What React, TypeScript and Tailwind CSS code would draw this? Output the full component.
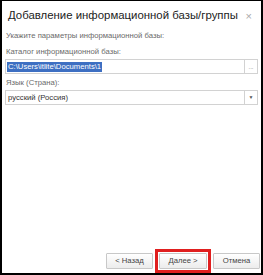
export default function App() {
  return (
    <div
      className="w-[263px] h-[275px] bg-white border-black border-l-2 border-r-2 border-t border-b-2 flex flex-col text-[#333]"
      style={{ fontFamily: '"Liberation Sans", Arial, sans-serif' }}
    >
      <div className="flex items-center justify-between pl-[6px] pr-[9px] h-[30px] shrink-0">
        <span className="text-[11.4px] leading-none text-[#222] whitespace-nowrap">Добавление информационной базы/группы</span>
        <span className="text-[11px] text-[#aaa] leading-none">×</span>
      </div>

      <div className="px-[3px] flex flex-col">
        <div className="text-[7.7px] leading-[10px] text-[#6a6a6a] pl-[1px] whitespace-nowrap">Укажите параметры информационной базы:</div>
        <div className="text-[7.7px] leading-[10px] text-[#6a6a6a] pl-[1px] mt-[6px] whitespace-nowrap">Каталог информационной базы:</div>
        <div className="mt-[2px] h-[15px] flex border border-[#d2d2d2] bg-white">
          <div className="flex-1 flex items-center pl-[1px]">
            <span className="bg-[#3d6fc2] text-white text-[7.7px] leading-[10px] px-[1px] whitespace-nowrap">C:\Users\itlite\Documents\1</span>
          </div>
          <div className="w-[13px] border-l border-[#d2d2d2] flex items-end justify-center pb-[3px] text-[6px] text-[#777] leading-none">...</div>
        </div>
        <div className="text-[7.7px] leading-[10px] text-[#6a6a6a] pl-[1px] mt-[4px] whitespace-nowrap">Язык (Страна):</div>
        <div className="mt-[2px] h-[15px] flex border border-[#d2d2d2] bg-white">
          <div className="flex-1 flex items-center pl-[2px] text-[7.7px] text-[#333] whitespace-nowrap">русский (Россия)</div>
          <div className="w-[13px] border-l border-[#d2d2d2] flex items-center justify-center text-[5px] text-[#555] leading-none">▼</div>
        </div>
      </div>

      <div className="mt-auto flex items-end justify-end pr-[1px] gap-[2px]">
        <button className="mb-[4px] w-[47px] h-[16px] border border-[#c8c8c8] rounded-[1px] bg-gradient-to-b from-white to-[#ececec] text-[7.7px] text-[#444] leading-none">&lt; Назад</button>
        <div className="border-[3px] border-[#e01f1f] p-[1px]">
          <button className="block w-[48px] h-[16px] border border-[#c8c8c8] rounded-[1px] bg-gradient-to-b from-white to-[#ececec] text-[7.7px] text-[#444] leading-none">Далее &gt;</button>
        </div>
        <button className="mb-[4px] w-[47px] h-[16px] border border-[#c8c8c8] rounded-[1px] bg-gradient-to-b from-white to-[#ececec] text-[7.7px] text-[#444] leading-none">Отмена</button>
      </div>
    </div>
  );
}
